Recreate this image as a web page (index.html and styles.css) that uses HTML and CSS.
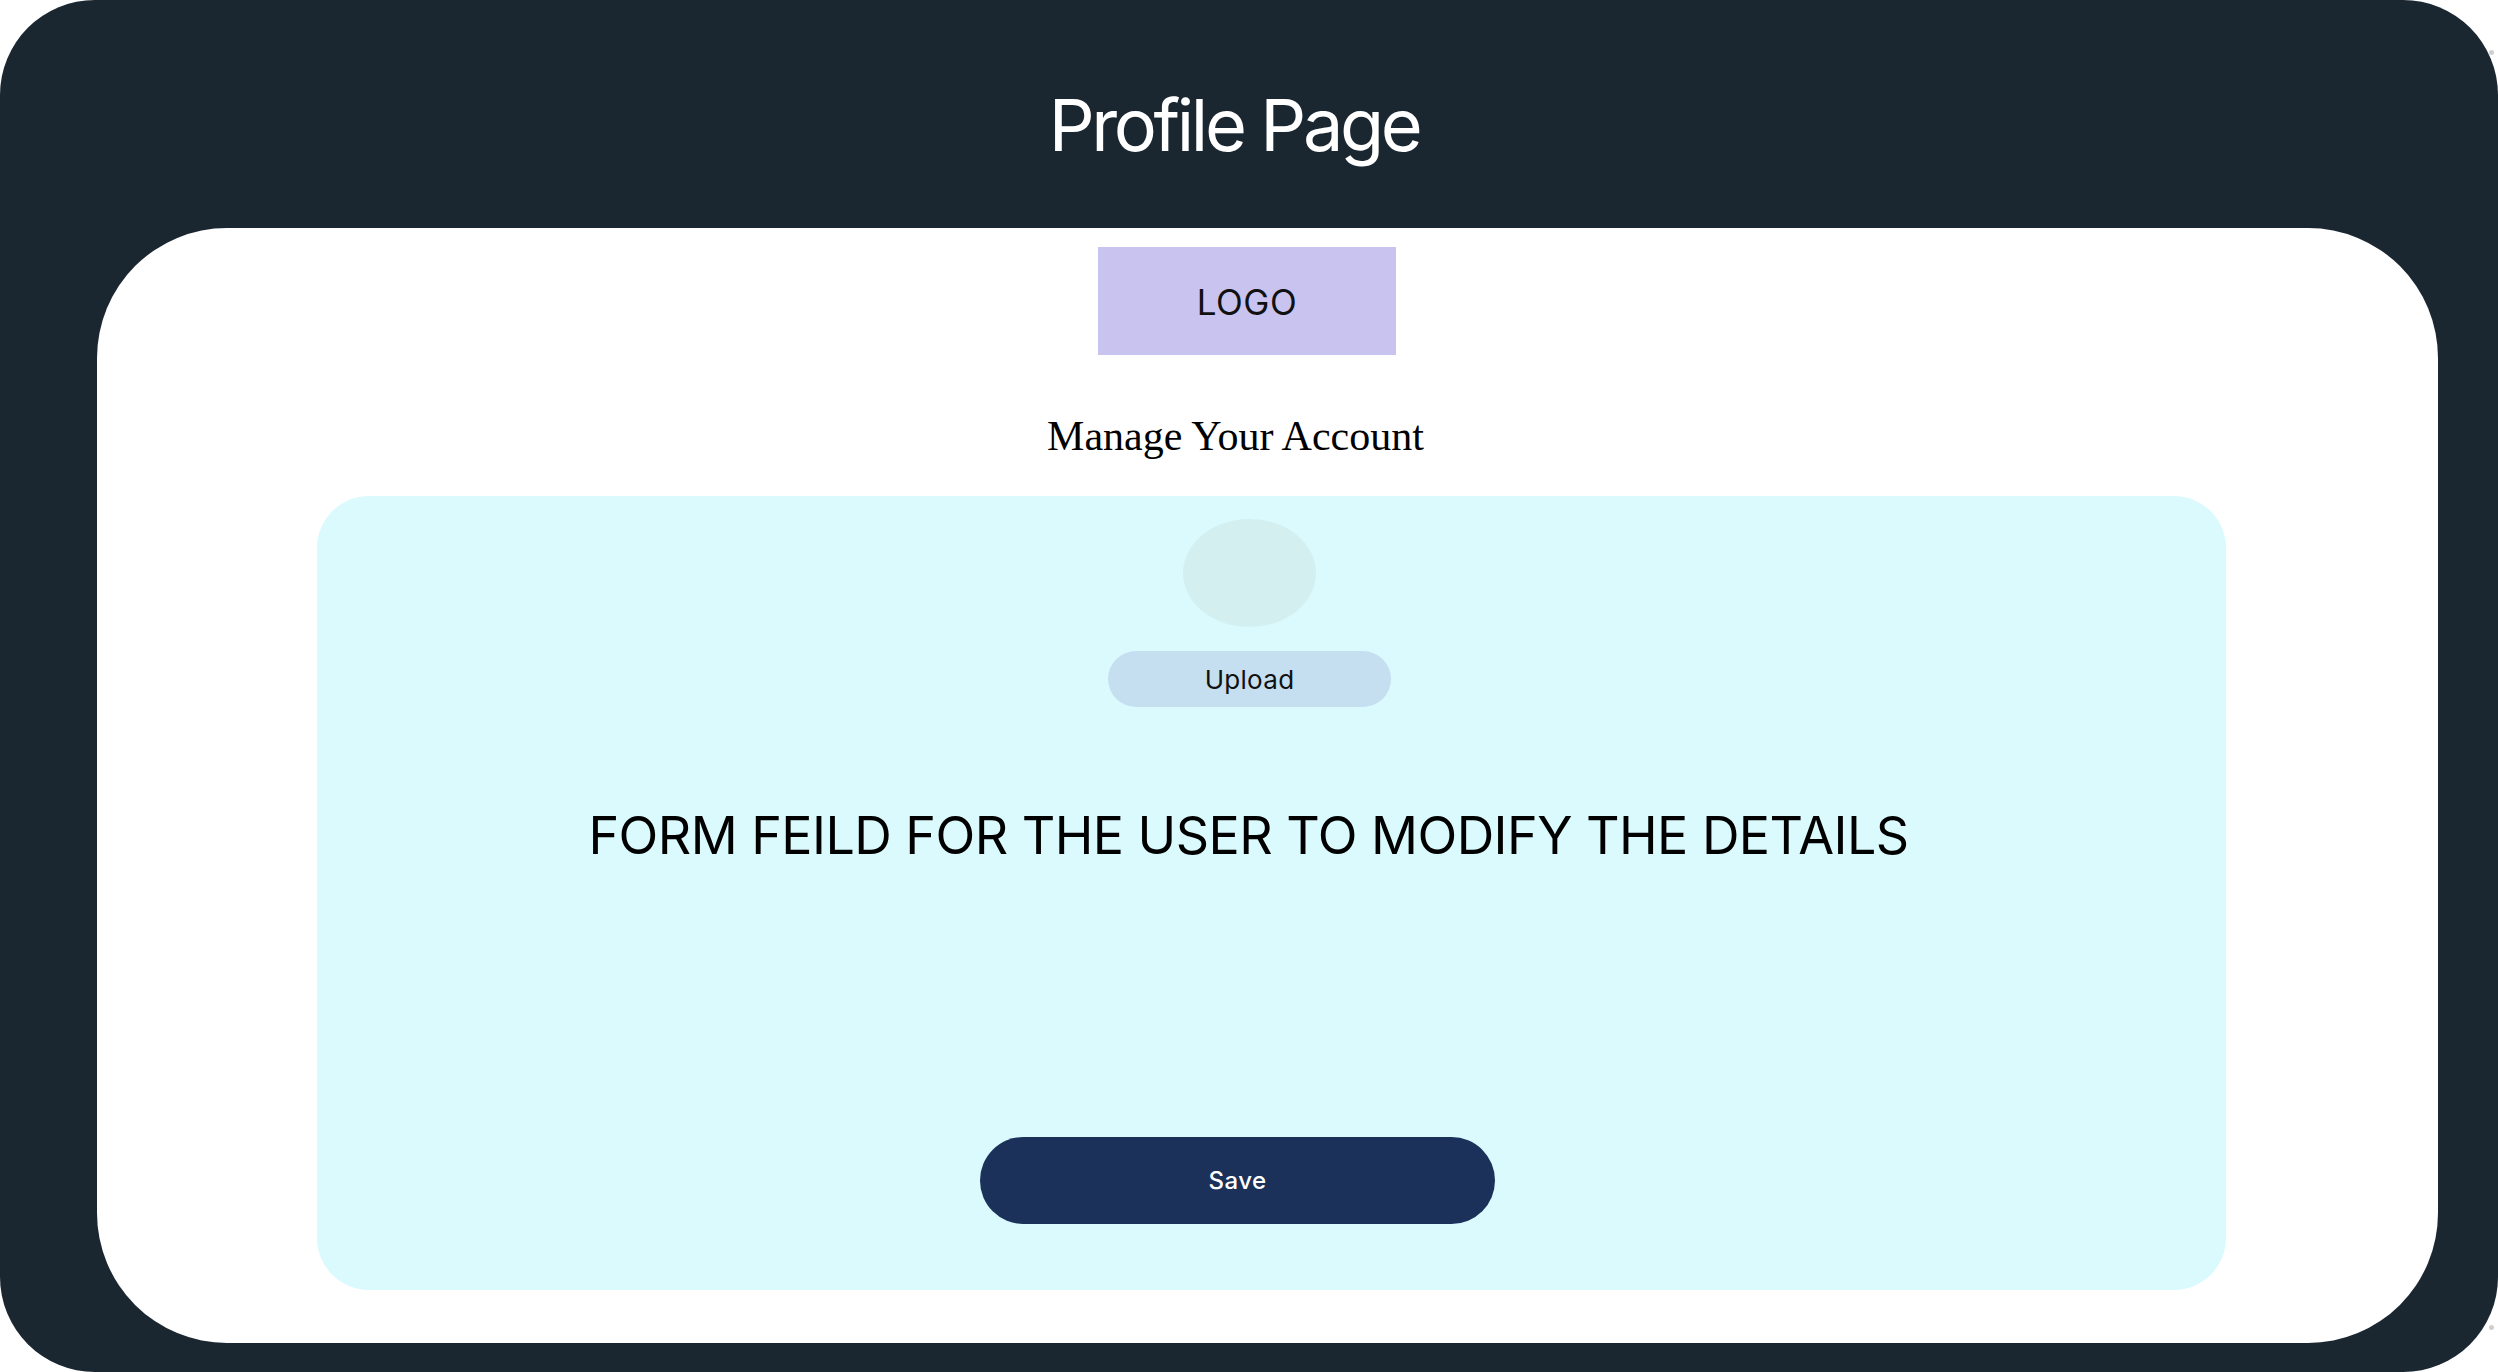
FILE: index.html
```html
<!DOCTYPE html>
<html lang="en">
<head>
<meta charset="utf-8">
<title>Profile Page</title>
<link rel="stylesheet" href="styles.css">
</head>
<body>
<div class="frame">
  <header class="page-header">
    <h1 class="page-title">Profile Page</h1>
  </header>
  <main class="card">
    <div class="logo">LOGO</div>
    <h2 class="subtitle">Manage Your Account</h2>
    <section class="panel">
      <div class="avatar"></div>
      <button class="upload-btn" type="button">Upload</button>
      <p class="form-note">FORM FEILD FOR THE USER TO MODIFY THE DETAILS</p>
      <button class="save-btn" type="button">Save</button>
    </section>
  </main>
</div>
<span class="handle handle-top"></span>
<span class="handle handle-bottom"></span>
</body>
</html>
```

FILE: styles.css
```css
* {
  box-sizing: border-box;
}

html, body {
  margin: 0;
  padding: 0;
  background: #ffffff;
}

body {
  width: 2498px;
  height: 1372px;
  overflow: hidden;
  position: relative;
  font-family: "Inter", "Noto Sans", sans-serif;
}

.frame {
  width: 2498px;
  height: 1372px;
  background: #1a2630;
  border-radius: 95px;
  display: flex;
  flex-direction: column;
}

.page-header {
  height: 228px;
  display: flex;
  justify-content: center;
  padding-top: 81px;
  padding-right: 30px;
}

.page-title {
  margin: 0;
  font-family: "Inter", sans-serif;
  font-weight: 400;
  font-size: 72px;
  line-height: normal;
  color: #ffffff;
  letter-spacing: -3.4px;
}

.card {
  margin: 0 60px 0 97px;
  height: 1115px;
  background: #ffffff;
  border-radius: 130px;
  display: flex;
  flex-direction: column;
  align-items: center;
  padding-top: 19px;
}

.logo {
  width: 298px;
  height: 108px;
  background: #c9c4ef;
  margin-right: 41px;
  display: flex;
  align-items: center;
  justify-content: center;
  font-family: "Inter", sans-serif;
  font-size: 35px;
  color: #111111;
  letter-spacing: 0.5px;
  padding-top: 2px;
}

.subtitle {
  margin: 57px 64px 0 0;
  font-family: "Liberation Serif", "Times New Roman", serif;
  font-weight: 400;
  font-size: 42px;
  line-height: normal;
  color: #000000;
}

.panel {
  margin-top: 36px;
  margin-left: 8px;
  width: 1909px;
  height: 794px;
  background: #dafafe;
  border-radius: 52px;
  display: flex;
  flex-direction: column;
  align-items: center;
  padding-top: 23px;
}

.avatar {
  width: 133px;
  height: 108px;
  border-radius: 50%;
  background: #d4eff0;
  margin-right: 44px;
}

.upload-btn {
  margin: 24px 44px 0 0;
  width: 283px;
  height: 56px;
  border: none;
  border-radius: 28px;
  background: #c5dff1;
  font-family: "Inter", sans-serif;
  font-size: 26px;
  letter-spacing: 0.3px;
  color: #111111;
  padding: 0;
}

.form-note {
  margin: 97px 46px 0 0;
  font-family: "Inter", sans-serif;
  font-size: 52px;
  line-height: normal;
  font-weight: 400;
  letter-spacing: -0.55px;
  color: #000000;
}

.save-btn {
  margin: 270px 68px 0 0;
  width: 515px;
  height: 87px;
  border: none;
  border-radius: 44px;
  background: #1b3159;
  color: #ffffff;
  font-family: "Inter", sans-serif;
  font-weight: 500;
  font-size: 24px;
  letter-spacing: 0.5px;
  padding: 0;
}

.handle {
  position: absolute;
  width: 5px;
  height: 5px;
  border-radius: 50%;
  background: #cfcfcf;
  left: 2489px;
}

.handle-top {
  top: 50px;
}

.handle-bottom {
  top: 1325px;
}
```
